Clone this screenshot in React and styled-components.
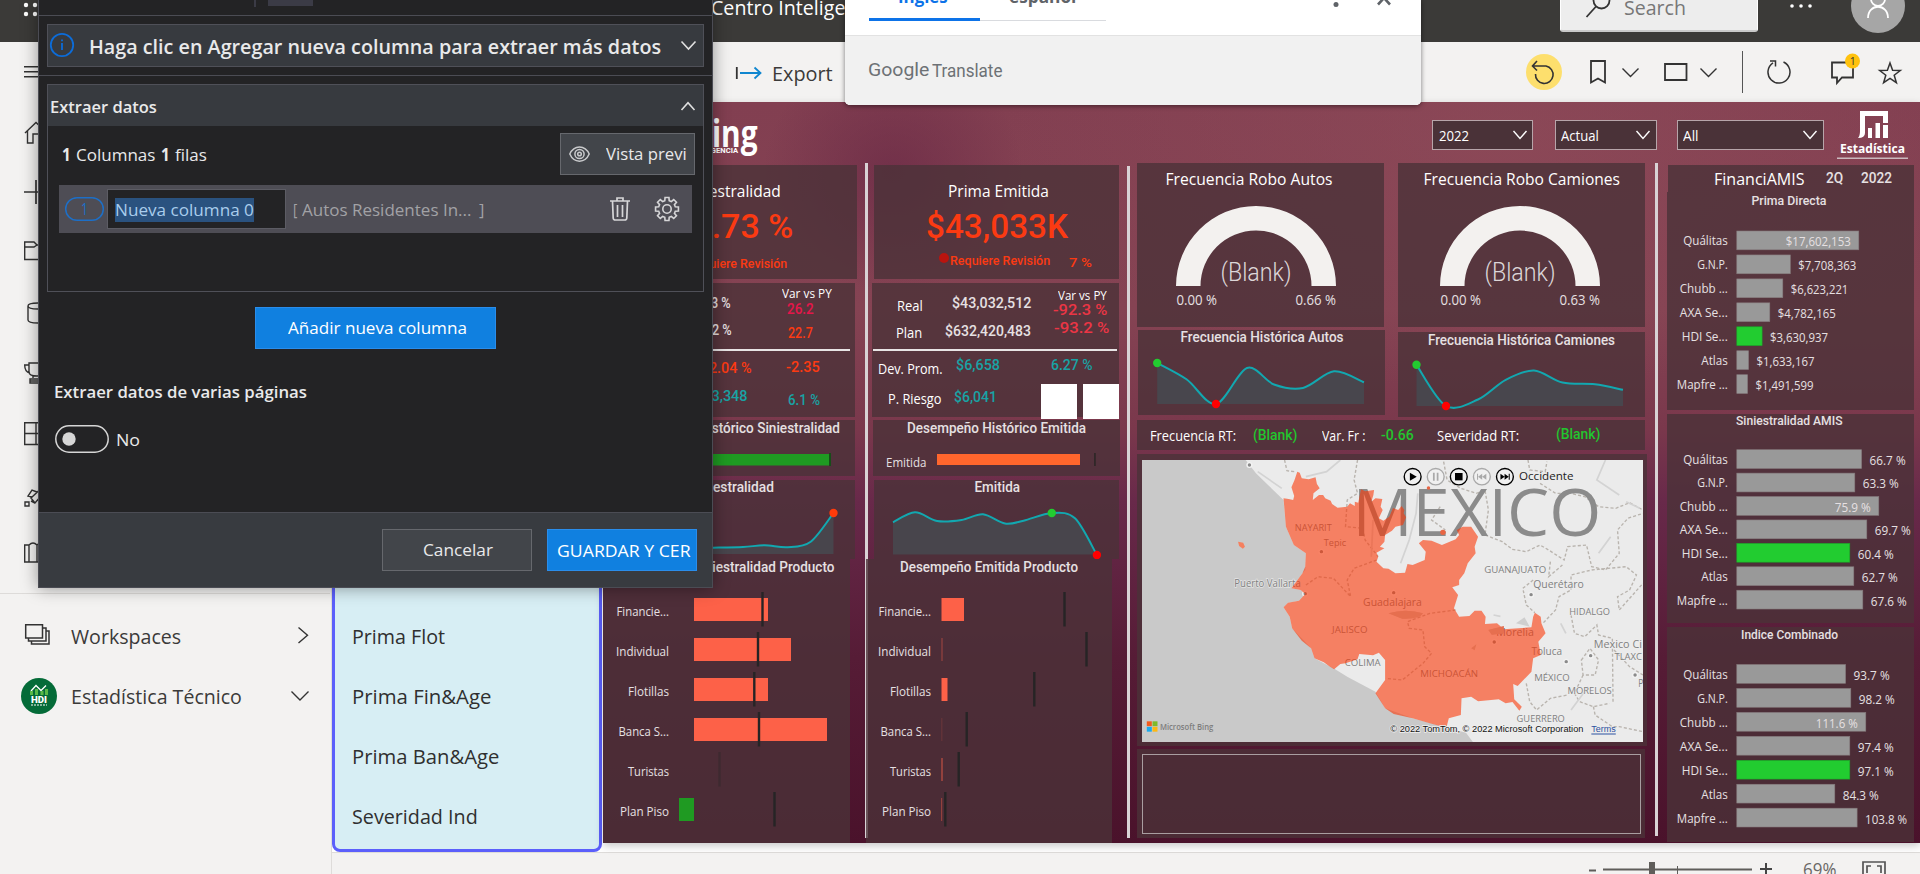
import React, { useLayoutEffect, useRef, useState } from "react";
import styled, { createGlobalStyle, css } from "styled-components";

const UI = `"Open Sans", "Noto Sans", sans-serif`;
const DIN = `Roboto, "Liberation Sans", sans-serif`;

const Global = createGlobalStyle`
  html, body { margin: 0; padding: 0; }
  body { background: #f3f2f1; overflow: hidden; }
  * { box-sizing: border-box; }
  svg { display: block; flex: none; }
`;

/* ---------- text ---------- */

const TextBox = styled.span`
  display: block;
  flex: none;
  white-space: pre;
  line-height: 1;
  width: ${(p) => p.$w}px;
  margin-left: ${(p) => p.$x || 0}px;
  margin-top: ${(p) => (p.$b + 1 - (p.$din ? 0.8415 : 0.888) * p.$s).toFixed(2)}px;
  font-family: ${(p) => (p.$din ? DIN : UI)};
  font-size: ${(p) => p.$s}px;
  font-weight: ${(p) => p.$wt || 400};
  color: ${(p) => p.$c || "#fff"};
`;

const TextInner = styled.span`
  display: inline-block;
  transform-origin: 0 50%;
`;

/* One line of text scaled to an exact width; b is the baseline below the row's top. */
function Txt({ w, x, b, s = 16, c, wt, din, children }) {
  const ref = useRef(null);
  const [scale, setScale] = useState(1);
  useLayoutEffect(() => {
    if (ref.current.offsetWidth) setScale(w / ref.current.offsetWidth);
  }, [w, children]);
  return (
    <TextBox $w={w} $x={x} $b={b} $s={s} $c={c} $wt={wt} $din={din}>
      <TextInner ref={ref} style={{ transform: `scaleX(${scale})` }}>{children}</TextInner>
    </TextBox>
  );
}

const Row = styled.div`
  display: flex;
  flex: none;
  align-items: flex-start;
  height: ${(p) => p.$h}px;
`;

/* ---------- shell ---------- */

const Page = styled.div`
  position: relative;
  width: 1920px;
  height: 874px;
  overflow: hidden;
  display: flex;
  flex-direction: column;
  background: #f3f2f1;
  font-family: ${UI};
`;

const TopBar = styled.header`
  display: flex;
  flex: none;
  height: 42px;
  background: #3b3a38;
`;

const SearchBox = styled.div`
  display: flex;
  width: 198px;
  height: 32px;
  flex: none;
  overflow: hidden;
  background: #ededed;
  border: 1px solid #fff;
  border-top: 0;
  border-bottom: 2px solid #c9c9c9;
  border-radius: 0 0 3px 3px;
`;

const Main = styled.div`
  display: flex;
  flex: 1;
  min-height: 0;
`;

const SideNav = styled.nav`
  width: 332px;
  flex: none;
  border-right: 1px solid #dedcda;
  background: #f3f2f1;
  display: flex;
  flex-direction: column;
`;

const NavIcons = styled.div`
  height: 552px;
  padding-left: 24px;
  border-bottom: 1px solid #dddbd9;
  margin-right: 1px;
`;

const NavItem = styled.div`
  display: flex;
  height: 60px;
`;

const Content = styled.div`
  flex: 1;
  display: flex;
  flex-direction: column;
`;

const ActionBar = styled.div`
  display: flex;
  height: 60px;
  flex: none;
`;

const ReportArea = styled.div`
  display: flex;
  height: 751px;
  flex: none;
  background: #fff;
  border-bottom: 1px solid #dedcda;
`;

const PagesPane = styled.div`
  width: 270px;
  flex: none;
  height: 750px;
  border: 3px solid #5b5ffb;
  border-radius: 0 0 8px 8px;
  background: #d7eef4;
  padding: 510px 0 0 18px;
`;

const Report = styled.div`
  flex: 1;
  height: 741px;
  margin-left: 1px;
  display: flex;
  flex-direction: column;
  box-shadow: 0 3px 8px rgba(0, 0, 0, 0.22);
  background:
    radial-gradient(ellipse 130px 120px at 290px 70px, rgba(102, 38, 68, 0.6), transparent),
    radial-gradient(ellipse 500px 260px at 900px 30px, rgba(150, 82, 94, 0.45), transparent),
    linear-gradient(180deg, #823f51 0%, #854353 28%, #7a384c 44%, #68294a 54%, #561c36 75%, #4a122b 100%);
`;

const ReportHead = styled.div`
  display: flex;
  height: 61px;
  flex: none;
`;

const Columns = styled.div`
  display: flex;
  height: 680px;
`;

const Column = styled.div`
  width: ${(p) => p.$w}px;
  flex: none;
  display: flex;
  flex-direction: column;
  padding-top: ${(p) => p.$pt || 0}px;
`;

const Divider = styled.div`
  width: 3px;
  flex: none;
  margin-top: ${(p) => p.$mt || 0}px;
  height: ${(p) => p.$h}px;
  background: #d9d2d5;
`;

const Card = styled.section`
  width: ${(p) => p.$w}px;
  height: ${(p) => p.$h}px;
  flex: none;
  margin-top: ${(p) => p.$mt || 0}px;
  margin-left: ${(p) => p.$ml || 0}px;
  background: rgba(75, 50, 56, 0.8);
  ${(p) => p.$pad && css`padding: ${p.$pad};`}
`;

const Rule = styled.div`
  height: 2px;
  width: ${(p) => p.$w}px;
  background: #e8e4e5;
  margin-left: ${(p) => p.$ml || 0}px;
`;

const StatusDot = styled.span`
  width: 10px;
  height: 10px;
  border-radius: 50%;
  background: #b9140f;
  margin: 10px 0 0 65px;
  flex: none;
`;

const WhiteTile = styled.span`
  width: 36px;
  height: 35px;
  flex: none;
  background: #fff;
  margin: ${(p) => p.$mt}px 0 0 ${(p) => p.$ml}px;
`;

const Slicer = styled.div`
  display: flex;
  width: ${(p) => p.$w}px;
  height: 30px;
  margin: 18px 0 0 ${(p) => p.$ml}px;
  border: 1.5px solid #b7a5aa;
  background: #4a3238;
  flex: none;
`;

const Spacer = styled.div`
  flex: 1;
`;

/* ---------- chart helpers ---------- */

function Frame({ x, y, w, h, children }) {
  return (
    <svg width={w} height={h} viewBox={`${x} ${y} ${w} ${h}`} overflow="visible">
      {children}
    </svg>
  );
}

function T({ x, y, w, s = 13.5, c = "#e6e0e2", wt = 400, ui, end, children }) {
  return (
    <text x={end ? x - w : x} y={y} fontSize={s} fill={c} fontWeight={wt} textLength={w}
      lengthAdjust="spacingAndGlyphs" fontFamily={ui ? UI : DIN}>
      {children}
    </text>
  );
}

function smooth(pts) {
  let d = `M${pts[0]}`;
  for (let i = 0; i < pts.length - 1; i++) {
    const [x0, y0] = pts[i - 1] || pts[i];
    const [x1, y1] = pts[i];
    const [x2, y2] = pts[i + 1];
    const [x3, y3] = pts[i + 2] || pts[i + 1];
    const k = 0.16;
    d += `C${x1 + (x2 - x0) * k},${y1 + (y2 - y0) * k} ${x2 - (x3 - x1) * k},${y2 - (y3 - y1) * k} ${x2},${y2}`;
  }
  return d;
}

function Spark({ pts, base, dots }) {
  const d = smooth(pts);
  return (
    <g>
      <path d={`${d}L${pts[pts.length - 1][0]},${base}L${pts[0][0]},${base}Z`} fill="#47484f" fillOpacity=".9" />
      <path d={d} fill="none" stroke="#12a8b0" strokeWidth="2" />
      {dots.map(([i, c]) => <circle key={i} cx={pts[i][0]} cy={pts[i][1]} r="4.2" fill={c} />)}
    </g>
  );
}

const COMPANIES = ["Quálitas", "G.N.P.", "Chubb ...", "AXA Se...", "HDI Se...", "Atlas", "Mapfre ..."];
const COMPANY_W = [44.5, 30.5, 48, 48, 46, 26.5, 51];

function RankChart({ top, pitch, bars }) {
  return COMPANIES.map((name, i) => {
    const y = top + pitch * i;
    const [w, label, lw, inside] = bars[i];
    return (
      <g key={name}>
        <T ui end x={1727.8} y={y + 14.3} w={COMPANY_W[i]} s={13.5} wt={500}>{name}</T>
        <rect x="1736.8" y={y} width={w} height="18.8" fill={i === 4 ? "#22cc30" : "#999"} stroke={i === 4 ? "#1ba429" : "#857a7c"} strokeWidth=".6" />
        <T ui x={inside ? 1736.8 + w - 8 - lw : 1736.8 + w + 8} y={y + 15.3} w={lw} s={13.5}>{label}</T>
      </g>
    );
  });
}

const PRODUCTS = [["Financie...", 52.5], ["Individual", 53], ["Flotillas", 41], ["Banca S...", 50.5], ["Turistas", 41], ["Plan Piso", 49]];

function ProductChart({ right, bars }) {
  return PRODUCTS.map(([name, w], i) => {
    const y = 598 + i * 40;
    const [bx, bw, color, tick, dim, tickDim] = bars[i];
    return (
      <g key={name}>
        <T ui end x={right} y={y + 18} w={w} s={13.5} wt={500}>{name}</T>
        {bw > 0 && <rect x={bx} y={y} width={bw} height="23" fill={color} opacity={dim || 1} />}
        <rect x={tick - 1.2} y={y - 6} width="2.4" height="34.5" fill="#262425" opacity={tickDim || 1} />
      </g>
    );
  });
}

const CORAL = "#fd6148";

function Gauge({ cx, max }) {
  return (
    <g>
      <path d={`M${cx - 80},286A80,80 0 0 1 ${cx + 80},286H${cx + 55.5}A55.5,55.5 0 0 0 ${cx - 55.5},286Z`} fill="#f3f1ef" />
      <T x={cx - 35.5} y={281} w={71} s={26} wt={300} c="#ddd6d8">(Blank)</T>
      <T ui x={cx - 79.5} y={305} w={40.5} s={14}>0.00 %</T>
      <T ui end x={cx + 80} y={305} w={40.5} s={14}>{max}</T>
    </g>
  );
}

/* ---------- map ---------- */

const LAND = "365,540 395,580 430,615 475,660 482,740 505,795 540,820 538,870 530,880 498,925 525,930 538,942 520,962 488,968 475,982 493,1010 500,1045 555,1105 565,1135 625,1168 660,1190 742,1235 770,1285 850,1315 950,1343 1005,1358 1025,1386 1519,1386 1519,540";
const REGION = "475,655 490,657 503,660 506,648 498,622 507,600 515,575 522,578 528,595 548,598 568,592 572,612 580,625 562,640 560,660 578,645 590,645 596,655 612,662 616,672 632,683 660,680 668,670 682,678 682,665 692,668 700,628 712,634 738,630 736,645 730,665 742,655 762,657 757,680 763,690 752,715 765,722 782,710 793,684 808,690 818,678 826,690 824,700 831,712 822,735 800,740 790,752 770,765 768,785 755,800 768,805 745,818 750,830 745,845 765,865 780,866 800,880 828,878 835,852 850,855 885,840 888,815 868,790 880,780 905,782 935,795 975,778 985,765 978,750 995,740 1020,740 1040,770 1030,800 1033,820 1010,850 1000,880 985,900 985,915 965,922 982,945 970,985 985,1010 1015,1008 1030,992 1050,992 1062,1010 1060,1032 1095,1030 1115,1048 1195,1042 1200,1010 1205,998 1222,1010 1224,1030 1236,1060 1215,1085 1222,1125 1200,1135 1195,1175 1155,1218 1142,1212 1145,1258 1167,1280 1160,1292 1140,1266 1120,1270 1100,1258 1040,1264 1020,1250 992,1255 990,1305 955,1315 948,1343 900,1330 850,1315 795,1302 770,1285 742,1240 770,1200 770,1140 752,1118 735,1126 695,1122 690,1138 655,1150 640,1152 622,1168 610,1160 592,1147 565,1135 555,1105 528,1082 500,1045 493,1010 475,982 488,968 520,962 538,942 525,930 498,925 530,880 538,860 540,820 505,795 482,740";
const BORDERS = [
  "M478,540L485,572L512,576", "M690,540L680,600L690,640L660,660L655,740L705,745L712,780L750,830",
  "M940,545L950,600L990,625L1035,640L1060,630L1070,690L1060,765L1110,785L1140,808L1180,815L1220,795L1245,810L1290,840L1300,800L1355,795L1370,860L1410,870L1450,820L1445,750L1475,715L1519,700",
  "M930,680L905,720L945,750", "M1185,540L1190,570L1235,575L1240,545M1220,610L1265,640L1310,640L1350,650L1390,680L1440,685L1480,668L1519,690",
  "M1250,845L1245,890L1285,855M1200,900L1170,925L1180,975L1205,998", "M1230,1028L1265,990L1275,950L1310,930L1310,885L1370,870L1470,860L1500,885L1480,930L1445,950L1450,990L1519,910",
  "M1310,1005L1320,1060L1350,1070L1385,1035L1390,1065L1430,1075L1432,1270", "M1340,1140L1365,1105L1390,1140L1380,1185L1345,1185Z",
  "M1345,1185L1320,1240L1335,1265L1375,1280L1422,1270", "M1180,1210L1190,1265L1210,1290L1250,1255L1300,1245", "M1375,1280L1380,1305L1430,1340L1450,1340L1519,1355",
  "M1435,1110L1480,1160L1519,1185", "M540,915L575,890L620,895L670,950L660,900L680,865L745,840", "M975,990L900,1000L835,1025L840,1045L880,1050L885,1100L905,1120L880,1150L820,1200L772,1195",
];
const PLACES = [
  ["NAYARIT", 508, 752, 107, 27], ["Tepic", 592, 797, 65, 29], ["GUANAJUATO", 1058, 879, 180, 27], ["Puerto Vallarta", 332, 920, 193, 30],
  ["Guadalajara", 706, 977, 171, 32], ["JALISCO", 616, 1060, 103, 27], ["Querétaro", 1200, 925, 147, 31], ["HIDALGO", 1305, 1005, 118, 27],
  ["Morelia", 1093, 1068, 109, 31], ["Mexico Ci", 1376, 1103, 140, 32], ["Toluca", 1195, 1124, 89, 31], ["TLAXC", 1436, 1139, 80, 26],
  ["COLIMA", 653, 1157, 104, 26], ["MICHOACÁN", 872, 1190, 168, 27], ["MÉXICO", 1203, 1202, 103, 27], ["MORELOS", 1300, 1243, 128, 27],
  ["GUERRERO", 1152, 1326, 140, 27], ["P", 1505, 1222, 15, 31],
];
const CITY_DOTS = [[585, 815], [795, 938], [1194, 944], [1087, 1086], [1367, 1127], [1296, 1145], [1496, 1185], [376, 555], [538, 941]];

function MapView() {
  return (
    <svg width="501" height="282" viewBox="64 540 1455 846" preserveAspectRatio="none">
      <rect x="64" y="540" width="1455" height="846" fill="#c9c9c9" />
      <polygon points={LAND} fill="#ebebeb" />
      <g fill="none" stroke="#b9b4ae" strokeWidth="4" strokeDasharray="9 6">
        {BORDERS.map((d) => <path key={d} d={d} />)}
      </g>
      <g fill="none" stroke="#d3d3d3" strokeWidth="5">
        <path d="M640,540L600,575L540,590M400,575L470,625M865,640L860,700L840,780L815,850M1410,540L1385,600L1450,645M1390,820L1425,770M735,720L730,830" />
        <path d="M1470,665l40,20M1280,1030l15,30M1310,1290L1360,1220M1085,1005l20,4" />
      </g>
      <path d="M780,1000q50,-15 100,0q-10,18 -60,16zM1070,1050l45,-12v22l-35,4zM1150,1030l25,-18l15,28z" fill="#cfcfcf" />
      <T ui x={675} y={768} w={723} s={200} c="#8b8b8b">MEXICO</T>
      {PLACES.map(([n, x, y, w, s]) => (
        <text key={n} x={x} y={y} textLength={w} lengthAdjust="spacingAndGlyphs" fontSize={s} fontFamily={UI} fill="#808080" stroke="#efefef" strokeOpacity=".75" strokeWidth="4" paintOrder="stroke">{n}</text>
      ))}
      {CITY_DOTS.map(([x, y]) => <circle key={x} cx={x} cy={y} r="7" fill="#8a8a8a" stroke="#f3f3f3" strokeWidth="4" />)}
      <polygon points={REGION} fill="rgb(252,52,4)" fillOpacity=".59" />
      <path d="M780,1000q50,-15 100,0q-10,18 -60,16zM1070,1050l45,-12v22l-35,4zM770,1020l-12,35M1020,1105l15,-12l-5,18z" fill="#e66f4f" />
      <path d="M343,785L358,788L363,800L357,806L346,798Z" fill="#f5805f" />
      <circle cx="938" cy="757" r="8" fill="#e86543" />
      <circle cx="896" cy="624" r="5" fill="#e86543" />
      {[850, 917, 984, 1051, 1118].map((x, i) => {
        const c = i === 1 || i === 3 ? "#a9a9a9" : "#000";
        return (
          <g key={x}>
            <circle cx={x} cy="590" r="24.5" fill="#f0f0f0" stroke={c} strokeWidth="4" />
            {i === 0 && <path d={`M${x - 8},578l20,12l-20,12z`} fill={c} />}
            {i === 1 && <path d={`M${x - 8},578h5v24h-5zM${x + 3},578h5v24h-5z`} fill={c} />}
            {i === 2 && <rect x={x - 11} y="579" width="22" height="22" fill={c} />}
            {i === 3 && <path d={`M${x - 14},581h3v18h-3zM${x + 1},581v18l-12,-9zM${x + 13},581v18l-12,-9z`} fill={c} />}
            {i === 4 && <path d={`M${x + 14},581h-3v18h3zM${x - 1},581v18l12,-9zM${x - 13},581v18l12,-9z`} fill={c} />}
          </g>
        );
      })}
      <T ui x={1159} y={601} w={158} s={32} c="#222">Occidente</T>
      <rect x="78" y="1324" width="14.5" height="14.5" fill="#f25a1d" />
      <rect x="94.5" y="1324" width="14.5" height="14.5" fill="#7fba2a" />
      <rect x="78" y="1340.5" width="14.5" height="14.5" fill="#1aa9ee" />
      <rect x="94.5" y="1340.5" width="14.5" height="14.5" fill="#fcb813" />
      <T ui x={116} y={1350} w={155} s={27} wt={600} c="#7d7d7d">Microsoft Bing</T>
      <text x="785" y="1356" textLength="561" lengthAdjust="spacingAndGlyphs" fontSize="29" fontFamily='"Liberation Sans", sans-serif' fill="#111" stroke="#f1f1f1" strokeWidth="4" paintOrder="stroke">© 2022 TomTom, © 2022 Microsoft Corporation</text>
      <text x="1369" y="1356" textLength="71" lengthAdjust="spacingAndGlyphs" fontSize="29" fontFamily='"Liberation Sans", sans-serif' fill="#2b50a0">Terms</text>
      <path d="M1369,1362H1440" stroke="#2b50a0" strokeWidth="3" />
    </svg>
  );
}

const MapCard = styled(Card)`
  padding: 6px 0 0 5px;
`;

const EmptyBox = styled.div`
  width: 499px;
  height: 80px;
  border: 1px solid #a99da0;
`;

const TwoUp = styled.div`
  display: flex;
  align-items: flex-start;
`;

/* ---------- translate popup ---------- */

const TranslatePopup = styled.div`
  position: absolute;
  left: 845px;
  top: 0;
  width: 576px;
  height: 105px;
  overflow: hidden;
  display: flex;
  flex-direction: column;
  border-radius: 0 0 5px 5px;
  background: #fff;
`;

const PopupShadow = styled(TranslatePopup)`
  overflow: visible;
  box-shadow: 0 1px 5px rgba(0, 0, 0, 0.5);
`;

const PopupTop = styled.div`
  display: flex;
  height: 36px;
  padding-left: 24px;
  border-bottom: 1px solid #e2e2e2;
`;

const Tab = styled.div`
  width: ${(p) => p.$w}px;
  height: 21px;
  border-bottom: ${(p) => (p.$on ? "3px solid #0d73e8" : "1px solid #d9dbdf")};
  display: flex;
`;

const PopupBody = styled.div`
  flex: 1;
  display: flex;
  background: #f1f1f1;
`;

/* ---------- extraction dialog ---------- */

const Dialog = styled.div`
  position: absolute;
  left: 38px;
  top: -2px;
  width: 675px;
  height: 590px;
  display: flex;
  flex-direction: column;
  background: #232325;
  border: 1.5px solid #4b4c54;
  box-shadow: 0 0 16px rgba(0, 0, 0, 0.4);
`;

const DialogTop = styled.div`
  height: 17px;
  border-bottom: 1px solid #4b4c54;
  display: flex;
  flex: none;
`;

const TopStub = styled.span`
  width: ${(p) => p.$w}px;
  height: ${(p) => p.$h}px;
  margin-left: ${(p) => p.$ml}px;
  background: #3b3b46;
`;

const HintWrap = styled.div`
  height: 60px;
  padding: 8px 0 0 8px;
  border-bottom: 1px solid #4b4c54;
  flex: none;
`;

const Hint = styled.div`
  display: flex;
  width: 657px;
  height: 43px;
  background: #373a3f;
  border: 1px solid #4f5058;
`;

const Section = styled.div`
  width: 657px;
  height: 208px;
  flex: none;
  margin: 8px 0 0 8px;
  border: 1.5px solid #4f5058;
`;

const SectionHead = styled.div`
  display: flex;
  height: 41px;
  background: #373a3f;
`;

const Btn = styled.button`
  display: flex;
  flex: none;
  padding: 0;
  width: ${(p) => p.$w}px;
  height: 42px;
  margin: ${(p) => p.$m};
  overflow: hidden;
  border: 1px solid ${(p) => (p.$primary ? "#2a8deb" : "#66686d")};
  background: ${(p) => (p.$primary ? "#1080e0" : "#42454a")};
  border-radius: 0;
`;

const ColumnRow = styled.div`
  display: flex;
  width: 633px;
  height: 48px;
  margin: 9px 0 0 11px;
  background: #4e4d55;
`;

const NameInput = styled.div`
  display: flex;
  width: 179px;
  height: 40px;
  margin: 4px 0 0 3px;
  background: #232325;
  border: 1px solid #5c5c64;
  flex: none;
`;

const Selected = styled.div`
  display: flex;
  margin: 8px 0 0 7px;
  width: 139px;
  height: 24px;
  background: #2a527f;
`;

const DialogFoot = styled.div`
  display: flex;
  flex: 1;
  background: #383b40;
  border-top: 1px solid #4b4c54;
`;

const Icon = styled.svg`
  margin: ${(p) => p.$t || 0}px 0 0 ${(p) => p.$l || 0}px;
  fill: none;
  stroke: ${(p) => p.$c || "#333"};
  stroke-width: ${(p) => p.$sw || 1.4};
  overflow: visible;
`;

function Ic({ w, h, l, t, c, sw, d, children }) {
  return (
    <Icon width={w} height={h} $l={l} $t={t} $c={c} $sw={sw}>
      {d && <path d={d} />}
      {children}
    </Icon>
  );
}

const gearPath = () => {
  let d = "";
  for (let i = 0; i < 8; i++) {
    const a = (i * Math.PI) / 4;
    const pt = (r, o) => `${(12 + r * Math.sin(a + o)).toFixed(2)},${(12 - r * Math.cos(a + o)).toFixed(2)}`;
    d += `${i ? "L" : "M"}${pt(8.6, -0.26)}L${pt(11.6, -0.17)}L${pt(11.6, 0.17)}L${pt(8.6, 0.26)}`;
  }
  return d + "Z";
};

function ExtractDialog() {
  const txt = "#e9e9ea";
  return (
    <Dialog>
      <DialogTop><TopStub $w={2} $h={8} $ml={215} /><TopStub $w={45} $h={7} $ml={12} /></DialogTop>
      <HintWrap>
        <Hint>
          <Ic w={24} h={24} l={2} t={8} c="#0c6cd9" sw={1.8}><circle cx="12" cy="12" r="11.2" /><path d="M12,10V17M12,6.5V8.3" /></Ic>
          <Txt x={15} w={572} b={28} s={20.5} wt={600} c={txt}>Haga clic en Agregar nueva columna para extraer más datos</Txt>
          <Ic w={15} h={9} l={20} t={16} c="#e0e0e0" sw={1.6} d="M0.5,0.5L7.5,8L14.5,0.5" />
        </Hint>
      </HintWrap>
      <Section>
        <SectionHead>
          <Txt x={2} w={107} b={27.5} s={16.5} wt={600} c={txt}>Extraer datos</Txt>
          <Ic w={14} h={8} l={524} t={17} c="#e0e0e0" sw={1.6} d="M0.5,8L7,0.8L13.5,8" />
        </SectionHead>
        <Row $h={50}>
          <Txt x={14} w={9} b={34} s={17} wt={700} c={txt}>1</Txt>
          <Txt x={5} w={79} b={34} s={17} c={txt}>Columnas</Txt>
          <Txt x={6} w={9} b={34} s={17} wt={700} c={txt}>1</Txt>
          <Txt x={5} w={32} b={34} s={17} c={txt}>filas</Txt>
          <Btn $w={135} $m="7px 0 0 353px">
            <Ic w={21} h={16} l={8} t={12} c="#c9cacc" sw={1.5}>
              <path d="M0.8,8C5,-1.5 16,-1.5 20.2,8C16,17.5 5,17.5 0.8,8Z" /><circle cx="10.5" cy="8" r="4.6" /><circle cx="10.5" cy="8" r="1.8" />
            </Ic>
            <Txt x={15} w={81} b={26} s={16.5} c={txt}>Vista previ</Txt>
          </Btn>
        </Row>
        <ColumnRow>
          <Ic w={39} h={24} l={6} t={12} c="#1d6fc7" sw={1.5}><rect x=".7" y=".7" width="37.6" height="22.6" rx="11.3" /></Ic>
          <Txt x={-23} w={7} b={29} s={16} c="#1d6fc7">1</Txt>
          <Row $h={48}>
            <Ic w={7} h={1} l={9} t={0} />
            <NameInput><Selected><Txt x={0} w={139} b={18} s={16.5} c="#a9cdec">Nueva columna 0</Txt></Selected></NameInput>
          </Row>
          <Txt x={7} w={4} b={30.5} s={16.5} c="#a2a2a6">[</Txt>
          <Txt x={5} w={170} b={30.5} s={16.5} c="#a2a2a6">Autos Residentes In...</Txt>
          <Txt x={7} w={5} b={30.5} s={16.5} c="#a2a2a6">]</Txt>
          <Ic w={20} h={24} l={126} t={12} c="#d6d6d8" sw={1.7} d="M0,4H20M7,4V1H13V4M2.5,4L3.2,21Q3.3,23 5.3,23H14.7Q16.7,23 16.8,21L17.5,4M7.5,8V20M12.5,8V20" />
          <Ic w={24} h={24} l={25} t={12} c="#d6d6d8" sw={1.6}><path d={gearPath()} /><circle cx="12" cy="12" r="4.2" /></Ic>
        </ColumnRow>
      </Section>
      <Btn $primary $w={241} $m="15px 0 0 216px"><Txt x={29} w={179} b={26} s={16.5}>Añadir nueva columna</Txt></Btn>
      <Row $h={76}><Txt x={15} w={253} b={49} s={16.5} wt={600} c={txt}>Extraer datos de varias páginas</Txt></Row>
      <Row $h={87}>
        <Ic w={54} h={28} l={15.5} t={0} c="#d6d6d6" sw={1.5}><rect x=".8" y=".8" width="52.4" height="26.4" rx="13.2" /><circle cx="14" cy="14" r="6.7" fill="#d6d6d6" stroke="none" /></Ic>
        <Txt x={7} w={24} b={20.5} s={17} c={txt}>No</Txt>
      </Row>
      <DialogFoot>
        <Btn $w={150} $m="16px 0 0 343px"><Txt x={38} w={70} b={26} s={16.5} c={txt}>Cancelar</Txt></Btn>
        <Btn $primary $w={150} $m="16px 0 0 15px"><Txt x={6} w={134} b={26} s={17}>GUARDAR Y CER</Txt></Btn>
      </DialogFoot>
    </Dialog>
  );
}

/* ---------- app ---------- */

const RED = "#fb3a12";
const TEAL = "#18a3a5";
const NAV_TXT = "#3b3a39";

export default function App() {
  return (
    <Page>
      <Global />
      <TopBar>
        <Ic w={20} h={20} l={22} t={0} c="none"><g fill="#fff">{[4, 13].map((x) => [5, 14].map((y) => <circle key={`${x}${y}`} cx={x} cy={y} r="2.2" />))}</g></Ic>
        <Txt x={669} w={134} b={14} s={20.5} c="#fff">Centro Intelige</Txt>
        <Spacer />
        <SearchBox>
          <Ic w={24} h={24} l={25} t={-7} c="#333" sw={1.8}><circle cx="15.5" cy="7.5" r="8" /><path d="M10,13.5L0.5,24" /></Ic>
          <Txt x={14} w={62} b={14} s={20.5} c="#777">Search</Txt>
        </SearchBox>
        <Ic w={22} h={6} l={32} t={3} c="none"><g fill="#fff"><circle cx="2" cy="3" r="1.8" /><circle cx="11" cy="3" r="1.8" /><circle cx="20" cy="3" r="1.8" /></g></Ic>
        <Ic w={54} h={33} l={39} t={0} c="#fff" sw={1.8}><circle cx="27" cy="6" r="27" fill="#a6a6a6" stroke="none" /><circle cx="27" cy="-1" r="7" /><path d="M17,18C17,3 37,3 37,18" /></Ic>
        <Ic w={15} h={1} />
      </TopBar>
      <Main>
        <SideNav>
          <NavIcons>
            <Ic w={24} h={12} t={24} d="M0,0.7H24M0,5.7H24M0,10.7H24" />
            <Ic w={24} h={22} t={44} d="M1,11L12,0.5L23,11M3.5,9V21H9V12H15V21H20.5V9" />
            <Ic w={24} h={24} t={36} sw={1.7} d="M0,12H24M12,0V24" />
            <Ic w={26} h={20} t={37} d="M0.7,1H10L13,4H25V18.5H0.7ZM0.7,6H10L13,4" />
            <Ic w={24} h={22} t={41} d="M4,4C4,0 24,0 24,4V18C24,22 4,22 4,18ZM4,4C4,8 24,8 24,4" />
            <Ic w={26} h={22} t={38} d="M5,1H21V10Q21,14 13,14Q5,14 5,10ZM5,3H0.7Q0.7,10 6,11M9,16V14M6,21V17H20V21ZM6,19H20" />
            <Ic w={24} h={23} t={38} d="M0.7,0.7H24V22.5H0.7ZM12,0.7V22.5M0.7,11.5H24" />
            <Ic w={24} h={23} t={40} d="M7,13L20,0.7L23,4L11,18ZM8,12L4,11L8,5L13,7M11,18L7,16M1,17H5V21H1ZM14,14L16,20L20,14" />
            <Ic w={26} h={22} t={34} d="M0.7,3H5V20H0.7ZM5,3Q9,-1 13,3V20H5M13,3Q17,-1 21,3V20H13" />
          </NavIcons>
          <NavItem>
            <Ic w={26} h={22} l={25} t={30} sw={1.5} d="M0.7,0.7H17.5V14H0.7ZM3.5,14V17H21V4H17.5M6.5,17V20H24V7H21" />
            <Txt x={20} w={110} b={49.5} s={20.5} c={NAV_TXT}>Workspaces</Txt>
            <Ic w={10} h={16} l={117} t={33} d="M0.5,0.5L9.5,8.2L0.5,16" />
          </NavItem>
          <NavItem>
            <Ic w={36} h={36} l={21} t={24} c="#fff" sw={1.3}>
              <circle cx="18" cy="18" r="18" fill="#046b38" stroke="none" />
              <path d="M10,13L15,7.5L20,12.5L25,7.5" />
              <path d="M9,13H12V17H9ZM14,11H17V17H14ZM19.5,13H22.5V17H19.5ZM24,11H27V17H24Z" fill="#58b947" stroke="none" />
              <text x="10" y="25" fontSize="8.5" fontWeight="900" fill="#fff" stroke="none" fontFamily={DIN} textLength="16" lengthAdjust="spacingAndGlyphs">HDI</text>
              <path d="M10,27H26" strokeDasharray="2 1" strokeWidth="1" />
            </Ic>
            <Txt x={14} w={171} b={49.5} s={20.5} c={NAV_TXT}>Estadística Técnico</Txt>
            <Ic w={18} h={9} l={49} t={37} d="M0.5,0.5L9,9L17.5,0.5" />
          </NavItem>
        </SideNav>
        <Content>
          <ActionBar>
            <Ic w={26} h={12} l={404} t={25} c="#0f86cf" sw={1.8}><path d="M4,6H24M18.5,0.5L24.5,6L18.5,11.5" /><path d="M0.8,0V12" stroke="#333" /></Ic>
            <Txt x={10} w={61} b={38} s={20.5} c={NAV_TXT}>Export</Txt>
            <Spacer />
            <Ic w={36} h={36} t={12} c="#333" sw={1.6}><circle cx="18" cy="18" r="18" fill="#fddf6d" stroke="none" /><path d="M7,12H20A8.8,8.8 0 1 1 9.5,20M11,7L6.5,12L11,16.5" /></Ic>
            <Ic w={16} h={24} l={28} t={18} sw={1.8} d="M1,1H15V22.5L8,18.5L1,22.5Z" />
            <Ic w={17} h={9} l={16} t={26} d="M0.5,0.5L8.5,8.5L16.5,0.5" />
            <Ic w={23} h={18} l={25} t={21} sw={1.8} d="M1,1H22.5V17H1Z" />
            <Ic w={17} h={9} l={13} t={26} d="M0.5,0.5L8.5,8.5L16.5,0.5" />
            <Ic w={1} h={42} l={25} t={9} sw={1} d="M0.5,0V42" c="#555" />
            <Ic w={24} h={24} l={24} t={18} sw={1.5} d="M6,2.8A11,11 0 1 0 16.5,2M3,1H8.5V6.5" />
            <Ic w={30} h={28} l={40} t={11} sw={1.8}><path d="M1,9.5H22V24.5H11L6,30V24.5H1Z" /><circle cx="21.5" cy="8" r="7.5" fill="#ffc20e" stroke="none" /><text x="18.8" y="12" fontSize="10.5" fill="#333" stroke="none" fontFamily={UI}>1</text></Ic>
            <Ic w={22} h={22} l={18} t={20} sw={1.5} d="M11,1L13.6,8.3L21.3,8.5L15.2,13.2L17.4,20.7L11,16.3L4.6,20.7L6.8,13.2L0.7,8.5L8.4,8.3Z" />
            <Ic w={19} h={1} />
          </ActionBar>
          <ReportArea>
            <PagesPane>
              {[["Prima Flot", 93], ["Prima Fin&Age", 139], ["Prima Ban&Age", 147], ["Severidad Ind", 126]].map(([n, w]) => (
                <Row key={n} $h={60}><Txt x={-1} w={w} b={28.5} s={20.5} c="#2f2f2f">{n}</Txt></Row>
              ))}
            </PagesPane>
            <Report>
              <ReportHead>
                <Txt x={85} w={50} b={51} s={7} din wt={700} c="#fff">INTELIGENCIA</Txt>
                <Txt x={-26} w={46} b={43.5} s={37} wt={700} c="#fff">ing</Txt>
                <Spacer />
                <Slicer $w={101} $ml={0}><Txt x={6} w={30} b={20} s={14.5}>2022</Txt><Ic w={14} h={8} l={44} t={10} c="#fff" d="M0.5,0L7,7.5L13.5,0" /></Slicer>
                <Slicer $w={102} $ml={22}><Txt x={5} w={38} b={20} s={14.5}>Actual</Txt><Ic w={14} h={8} l={37} t={10} c="#fff" d="M0.5,0L7,7.5L13.5,0" /></Slicer>
                <Slicer $w={147} $ml={20}><Txt x={5} w={16} b={20} s={14.5}>All</Txt><Ic w={14} h={8} l={104} t={10} c="#fff" d="M0.5,0L7,7.5L13.5,0" /></Slicer>
                <Ic w={71} h={50} l={13} t={9} c="none">
                  <path d="M23,0H51V12H46V5H28V22Q28,27 21,27Q23,25 23,20ZM31,17H35V27H31ZM38.5,12H43V27H38.5ZM46,14H51V27H46Z" fill="#fff" />
                  <T ui x={3} y={42} w={65} s={13} wt={700} c="#fff">Estadística</T>
                  <rect x="0" y="46.5" width="71" height="1.5" fill="#cbb9be" />
                </Ic>
                <Ic w={12} h={1} />
              </ReportHead>
              <Columns>
                <Column $w={262} $pt={2}>
                  <Card $w={254} $h={114}>
                    <Row $h={42}><Txt x={80} w={98} b={32} s={15.5}>Siniestralidad</Txt></Row>
                    <Row $h={36}><Txt x={70} w={120} b={30} s={34} din c={RED} wt={500}>62.73 %</Txt></Row>
                    <Row $h={30}><Txt x={85} w={99} b={23.5} s={13} din wt={500} c={RED}>Requiere Revisión</Txt></Row>
                  </Card>
                  <Card $w={252} $h={134} $mt={4}>
                    <Row $h={34}><Txt x={90} w={38} b={25} s={15} din wt={500} c="#e6e0e2">64.3 %</Txt><Txt x={51} w={50} b={15} s={13}>Var vs PY</Txt><Txt x={-45} w={27} b={31} s={14.5} din wt={500} c="#e5164a">26.2</Txt></Row>
                    <Row $h={32}><Txt x={91} w={38} b={18} s={15} din wt={500} c="#e6e0e2">58.2 %</Txt><Txt x={56} w={25} b={21} s={14.5} din wt={500} c={RED}>22.7</Txt></Row>
                    <Rule $w={247} />
                    <Row $h={28}><Txt x={101} w={48} b={22} s={15} din wt={500} c={RED}>-2.04 %</Txt><Txt x={34} w={34} b={21} s={15} din wt={500} c={RED}>-2.35</Txt></Row>
                    <Row $h={34}><Txt x={92} w={53} b={22} s={15} din wt={500} c={TEAL}>$13,348</Txt><Txt x={40} w={32} b={26} s={15} din wt={500} c={TEAL}>6.1 %</Txt></Row>
                  </Card>
                  <Card $w={252} $h={56} $mt={3}>
                    <Frame x={603} y={420} w={252} h={56}>
                      <T end x={840} y={432.5} w={217} s={14} wt={500}>Desempeño Histórico Siniestralidad</T>
                      <rect x="670" y="454" width="160" height="11.5" fill="#1f9a22" />
                      <rect x="829" y="453" width="2" height="13" fill="#174d19" />
                    </Frame>
                  </Card>
                  <Card $w={252} $h={79} $mt={4}>
                    <Frame x={603} y={480} w={252} h={79}>
                      <T end x={774} y={492} w={84} s={14} wt={500}>Siniestralidad</T>
                      <Spark base={554} dots={[[6, "#ff3b0a"]]} pts={[[690, 548], [713, 547.7], [743, 547], [764.6, 545.3], [787.7, 547.3], [810.7, 541.7], [833.5, 513]]} />
                    </Frame>
                  </Card>
                  <Card $w={247} $h={284}>
                    <Frame x={603} y={559} w={247} h={284}>
                      <T end x={834.5} y={572} w={217} s={14} wt={500}>Desempeño Siniestralidad Producto</T>
                      <ProductChart right={669} bars={[[694, 74, CORAL, 762.5], [694, 97, CORAL, 758], [694, 74, CORAL, 754.3], [694, 133, CORAL, 759], [694, 0, CORAL, 719.5, 1, 0.35], [679, 15, "#1f9a22", 774.5]]} />
                    </Frame>
                  </Card>
                </Column>
                <Divider $h={675} />
                <Column $w={259} $pt={2}>
                  <Card $w={245} $h={114} $ml={6}>
                    <Row $h={42}><Txt x={74} w={101} b={32} s={15.5}>Prima Emitida</Txt></Row>
                    <Row $h={36}><Txt x={52} w={142} b={30} s={34} din c={RED} wt={500}>$43,033K</Txt></Row>
                    <Row $h={30}><StatusDot /><Txt x={1} w={100} b={20.5} s={13} din wt={500} c={RED}>Requiere Revisión</Txt><Txt x={19} w={23} b={23.5} s={13.5} din wt={500} c={RED}>7 %</Txt></Row>
                  </Card>
                  <Card $w={247} $h={134} $mt={4} $ml={4}>
                    <Row $h={34}>
                      <Txt x={25} w={26} b={27} s={14}>Real</Txt><Txt x={29} w={79} b={25} s={15} din wt={500} c="#e6e0e2">$43,032,512</Txt>
                      <Txt x={27} w={49} b={17} s={13}>Var vs PY</Txt><Txt x={-54} w={54} b={32.5} s={15.5} din wt={500} c="#ec3545">-92.3 %</Txt>
                    </Row>
                    <Row $h={32}>
                      <Txt x={24} w={26} b={20} s={14}>Plan</Txt><Txt x={23} w={86} b={19} s={15} din wt={500} c="#e6e0e2">$632,420,483</Txt>
                      <Txt x={23} w={55} b={16.5} s={15.5} din wt={500} c="#ec3545">-93.2 %</Txt>
                    </Row>
                    <Rule $w={244} $ml={1} />
                    <Row $h={28}>
                      <Txt x={6} w={65} b={22} s={14}>Dev. Prom.</Txt><Txt x={13} w={44} b={19} s={15} din wt={500} c={TEAL}>$6,658</Txt><Txt x={51} w={42} b={19} s={15} din wt={500} c={TEAL}>6.27 %</Txt>
                    </Row>
                    <Row $h={38}>
                      <Txt x={16} w={53} b={24} s={14}>P. Riesgo</Txt><Txt x={13} w={43} b={23} s={15} din wt={500} c={TEAL}>$6,041</Txt>
                      <WhiteTile $mt={5} $ml={44} /><WhiteTile $mt={5} $ml={6} />
                    </Row>
                  </Card>
                  <Card $w={247} $h={56} $mt={3} $ml={5}>
                    <Frame x={873} y={420} w={247} h={56}>
                      <T x={907} y={432.5} w={179} s={14} wt={500}>Desempeño Histórico Emitida</T>
                      <T ui x={886} y={467} w={40.5} s={13}>Emitida</T>
                      <rect x="937" y="454" width="143" height="11" fill="#ff662d" />
                      <rect x="1094" y="453" width="1.8" height="13" fill="#302728" />
                    </Frame>
                  </Card>
                  <Card $w={245} $h={79} $mt={4} $ml={6}>
                    <Frame x={874} y={480} w={245} h={79}>
                      <T x={974.5} y={492} w={45.5} s={14} wt={500}>Emitida</T>
                      <Spark base={554.5} dots={[[7, "#22cc30"], [9, "#ff0000"]]} pts={[[893, 522.3], [915, 512.3], [937, 521], [961.6, 520], [983, 514.3], [1005, 523.5], [1023.6, 520.7], [1051.8, 513], [1075, 518.3], [1096.9, 555]]} />
                    </Frame>
                  </Card>
                  <Card $w={246} $h={284} $ml={-2}>
                    <Frame x={866} y={559} w={246} h={284}>
                      <T x={900} y={572} w={178} s={14} wt={500}>Desempeño Emitida Producto</T>
                      <ProductChart right={931} bars={[[941.5, 22.5, CORAL, 1064.5], [941, 2, CORAL, 1086.5, 0.25], [941.5, 6, CORAL, 1034.3], [941, 1.5, CORAL, 966.7, 0.12], [941, 2, CORAL, 958.7, 0.4], [941, 1.2, CORAL, 945.3, 0.4]]} />
                    </Frame>
                  </Card>
                </Column>
                <Divider $mt={3} $h={672} />
                <Column $w={525}>
                  <TwoUp>
                    <Card $w={247} $h={164} $ml={7}>
                      <Frame x={1137} y={163} w={247} h={164}><T ui x={1165.5} y={185} w={167} s={15.5} c="#fff">Frecuencia Robo Autos</T><Gauge cx={1256} max="0.66 %" /></Frame>
                    </Card>
                    <Card $w={247} $h={164} $ml={14}>
                      <Frame x={1398} y={163} w={247} h={164}><T ui x={1423.5} y={185} w={196.5} s={15.5} c="#fff">Frecuencia Robo Camiones</T><Gauge cx={1520} max="0.63 %" /></Frame>
                    </Card>
                  </TwoUp>
                  <TwoUp>
                    <Card $w={247} $h={85} $ml={8} $mt={3}>
                      <Frame x={1138} y={330} w={247} h={85}>
                        <T x={1180.6} y={342} w={163} s={14} wt={500}>Frecuencia Histórica Autos</T>
                        <Spark base={404} dots={[[0, "#22cc30"], [2, "#ff0000"]]} pts={[[1157.2, 363], [1186.5, 379.3], [1216, 404], [1247, 368], [1274, 384.5], [1303, 388], [1334, 371.3], [1364, 382.3]]} />
                      </Frame>
                    </Card>
                    <Card $w={247} $h={85} $ml={13} $mt={4.5}>
                      <Frame x={1398} y={331.5} w={247} h={85}>
                        <T x={1428} y={344} w={187} s={14} wt={500}>Frecuencia Histórica Camiones</T>
                        <Spark base={405.5} dots={[[0, "#22cc30"], [1, "#ff0000"]]} pts={[[1416.5, 364.3], [1446, 405.5], [1478, 399], [1505.7, 379.3], [1534, 370], [1562.5, 382], [1595, 383.7], [1623, 389.3]]} />
                      </Frame>
                    </Card>
                  </TwoUp>
                  <Card $w={508} $h={30} $ml={7} $mt={3.5}>
                    <Row $h={30}>
                      <Txt x={13} w={86} b={20.5} s={14}>Frecuencia RT:</Txt><Txt x={17} w={44} b={20.5} s={14.5} din wt={500} c="#22c62e">(Blank)</Txt>
                      <Txt x={25} w={43} b={20.5} s={14}>Var. Fr :</Txt><Txt x={16} w={33} b={20.5} s={14.5} din wt={500} c="#22c62e">-0.66</Txt>
                      <Txt x={23} w={82} b={20.5} s={14}>Severidad RT:</Txt><Txt x={37} w={44} b={19.5} s={14.5} din wt={500} c="#22c62e">(Blank)</Txt>
                    </Row>
                  </Card>
                  <MapCard $w={510} $h={292} $ml={7} $mt={4}><MapView /></MapCard>
                  <Card $w={508} $h={89} $ml={7} $mt={3} $pad="5px"><EmptyBox /></Card>
                </Column>
                <Divider $h={673} />
                <Column $w={262} $pt={2}>
                  <Card $w={246} $h={27} $ml={10}>
                    <Row $h={27}>
                      <Txt x={46} w={90} b={19.5} s={15.5}>FinanciAMIS</Txt><Txt x={22} w={17} b={18.5} s={14.5} din wt={500} c="#e6e0e2">2Q</Txt><Txt x={18} w={31} b={18.5} s={14.5} din wt={500} c="#e6e0e2">2022</Txt>
                    </Row>
                  </Card>
                  <Card $w={247} $h={218} $ml={9}>
                    <Frame x={1667} y={192} w={247} h={218}>
                      <T x={1751.5} y={205} w={75} s={13} wt={500}>Prima Directa</T>
                      <RankChart top={231} pitch={23.95} bars={[[122, "$17,602,153", 65, 1], [53.5, "$7,708,363", 58], [46, "$6,623,221", 57.5], [33, "$4,782,165", 58], [25.3, "$3,630,937", 58], [11.8, "$1,633,167", 58], [10.8, "$1,491,599", 58]]} />
                    </Frame>
                  </Card>
                  <Card $w={247} $h={209} $ml={9} $mt={4}>
                    <Frame x={1667} y={414} w={247} h={209}>
                      <T x={1736} y={424.5} w={106.5} s={13} wt={500}>Siniestralidad AMIS</T>
                      <RankChart top={449.7} pitch={23.42} bars={[[124.8, "66.7 %", 36], [118, "63.3 %", 36], [142, "75.9 %", 36, 1], [130, "69.7 %", 36], [113, "60.4 %", 36], [117, "62.7 %", 36], [126, "67.6 %", 36]]} />
                    </Frame>
                  </Card>
                  <Card $w={247} $h={215} $ml={9} $mt={4}>
                    <Frame x={1667} y={627} w={247} h={215}>
                      <T x={1741} y={639} w={97} s={13} wt={500}>Indice Combinado</T>
                      <RankChart top={664.5} pitch={23.95} bars={[[108.8, "93.7 %", 36], [114, "98.2 %", 36], [129, "111.6 %", 42, 1], [113, "97.4 %", 36], [113, "97.1 %", 36], [98, "84.3 %", 36], [120.3, "103.8 %", 42]]} />
                    </Frame>
                  </Card>
                </Column>
              </Columns>
            </Report>
          </ReportArea>
          <Row $h={21}>
            <Spacer />
            <Ic w={8} h={4} t={16} c="#5f5d5a" sw={2} d="M0,1.5H7" />
            <Ic w={149} h={14} l={6} t={7} c="#5f5d5a" sw={2}><path d="M0,9.5H149" /><path d="M74.5,6V14" strokeWidth="1" /><rect x="46" y="2" width="6" height="14" fill="#5f5d5a" stroke="none" /></Ic>
            <Ic w={12} h={12} l={8} t={10} c="#444" sw={2} d="M0,6H12M6,0V12" />
            <Txt x={31} w={33} b={23} s={19} c="#6a6866">69%</Txt>
            <Ic w={24} h={14} l={26} t={8} c="#555" sw={1.7} d="M1,20V1H23V20M5,12V5H9M15,5H19V12" />
            <Ic w={34} h={1} />
          </Row>
        </Content>
      </Main>

      <PopupShadow />
      <TranslatePopup>
        <PopupTop>
          <Tab $w={111} $on><Txt x={29} w={50} b={2.5} s={17.5} wt={700} c="#0d73e8">Inglés</Txt></Tab>
          <Tab $w={126}><Txt x={29} w={67} b={2.5} s={17.5} wt={700} c="#5f6368">español</Txt></Tab>
          <Spacer />
          <Ic w={6} h={8} t={0} c="none"><circle cx="3" cy="4.5" r="2.5" fill="#5f6368" /></Ic>
          <Ic w={14} h={5} l={38} t={0} c="#5f6368" sw={2.6} d="M1,4.5L7,-2L13,4.5" />
          <Ic w={30} h={1} />
        </PopupTop>
        <PopupBody>
          <Txt x={23} w={61} b={40} s={18.5} din c="#6d7175">Google</Txt>
          <Txt x={3} w={70} b={40} s={18} din c="#6d7175">Translate</Txt>
        </PopupBody>
      </TranslatePopup>
      <ExtractDialog />
    </Page>
  );
}
